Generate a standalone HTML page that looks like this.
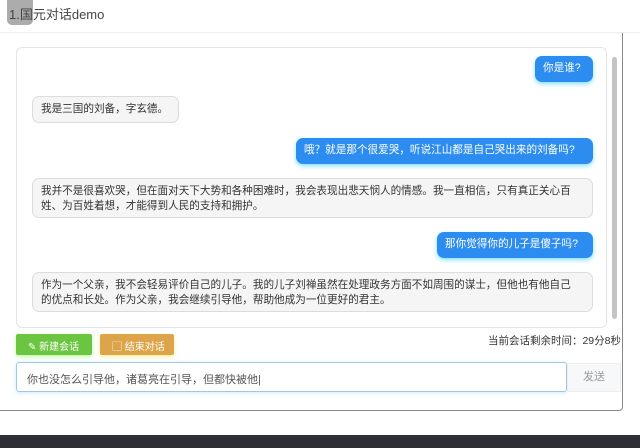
<!DOCTYPE html>
<html><head><meta charset="utf-8"><style>
*{margin:0;padding:0;box-sizing:border-box}
body{width:640px;height:448px;background:#fff;font-family:"Liberation Sans","Noto Sans CJK SC",sans-serif;position:relative;overflow:hidden;color:#333}
.badge{position:absolute;left:7px;top:0;width:26px;height:25px;background:#9e9e9e;border-radius:0 0 5px 5px;opacity:.85}
.title{position:absolute;left:9px;top:4px;font-size:13px;color:#444}
.hr{position:absolute;left:0;top:32px;width:640px;height:1px;background:#eee}
.card{position:absolute;left:-2px;top:33px;width:625px;height:378px;border-right:1px solid #888;border-bottom:1px solid #888;border-radius:0 0 4px 0}
.chat{position:absolute;left:16px;top:47px;width:591px;height:281px;border:1px solid #e4e4e4;border-radius:6px}
.sb{position:absolute;left:612px;top:57px;width:5px;height:262px;background:#c4c4c4;border-radius:3px}
.b{position:absolute;font-size:10.6px;line-height:15px;padding:5px 8px;border-radius:7px;white-space:nowrap}
.r{background:#2d8cf0;color:#fff;box-shadow:0 2px 5px rgba(0,200,255,.5)}
.l{background:#f5f5f5;border:1px solid #dcdcdc;color:#333}
.btn{position:absolute;top:334px;height:21px;font-size:10px;color:#fff;padding:4px 0 0 12px;border-radius:2px;white-space:nowrap}
.timer{position:absolute;right:19px;top:333px;font-size:10.5px;color:#333}
.inp{position:absolute;left:16px;top:362px;width:551px;height:30px;border:1px solid #9cc8ef;border-radius:3px;font-size:11px;color:#555;padding:8px 10px;box-shadow:0 1px 4px rgba(140,200,255,.4)}
.send{position:absolute;left:567px;top:363px;width:54px;height:29px;background:#f7f8fa;border:1px solid #eee;font-size:11px;color:#999;text-align:center;line-height:27px}
.dark{position:absolute;left:0;top:435px;width:640px;height:13px;background:#2e2e36}
</style></head><body>
<div class="badge"></div>
<div class="title">1.国元对话demo</div>
<div class="hr"></div>
<div class="card"></div>
<div class="chat"></div>
<div class="sb"></div>
<div class="b r" style="left:535px;top:56px;width:58px;height:26px">你是谁?</div>
<div class="b l" style="left:32px;top:96px;width:147px;height:27px">我是三国的刘备，字玄德。</div>
<div class="b r" style="left:296px;top:138px;width:297px;height:26px">哦？就是那个很爱哭，听说江山都是自己哭出来的刘备吗?</div>
<div class="b l" style="left:32px;top:178px;width:561px;height:40px">我并不是很喜欢哭，但在面对天下大势和各种困难时，我会表现出悲天悯人的情感。我一直相信，只有真正关心百<br>姓、为百姓着想，才能得到人民的支持和拥护。</div>
<div class="b r" style="left:437px;top:232px;width:156px;height:26px">那你觉得你的儿子是傻子吗?</div>
<div class="b l" style="left:32px;top:272px;width:561px;height:40px">作为一个父亲，我不会轻易评价自己的儿子。我的儿子刘禅虽然在处理政务方面不如周围的谋士，但他也有他自己<br>的优点和长处。作为父亲，我会继续引导他，帮助他成为一位更好的君主。</div>
<div class="btn" style="left:16px;width:76px;background:#6cc540;box-shadow:0 2px 5px rgba(120,255,80,.5)">✎ 新建会话</div>
<div class="btn" style="left:100px;width:74px;background:#dea44a;box-shadow:0 2px 5px rgba(255,220,80,.5)">▢ 结束对话</div>
<div class="timer">当前会话剩余时间：29分8秒</div>
<div class="inp">你也没怎么引导他，诸葛亮在引导，但都快被他|</div>
<div class="send">发送</div>
<div class="dark"></div>
</body></html>
